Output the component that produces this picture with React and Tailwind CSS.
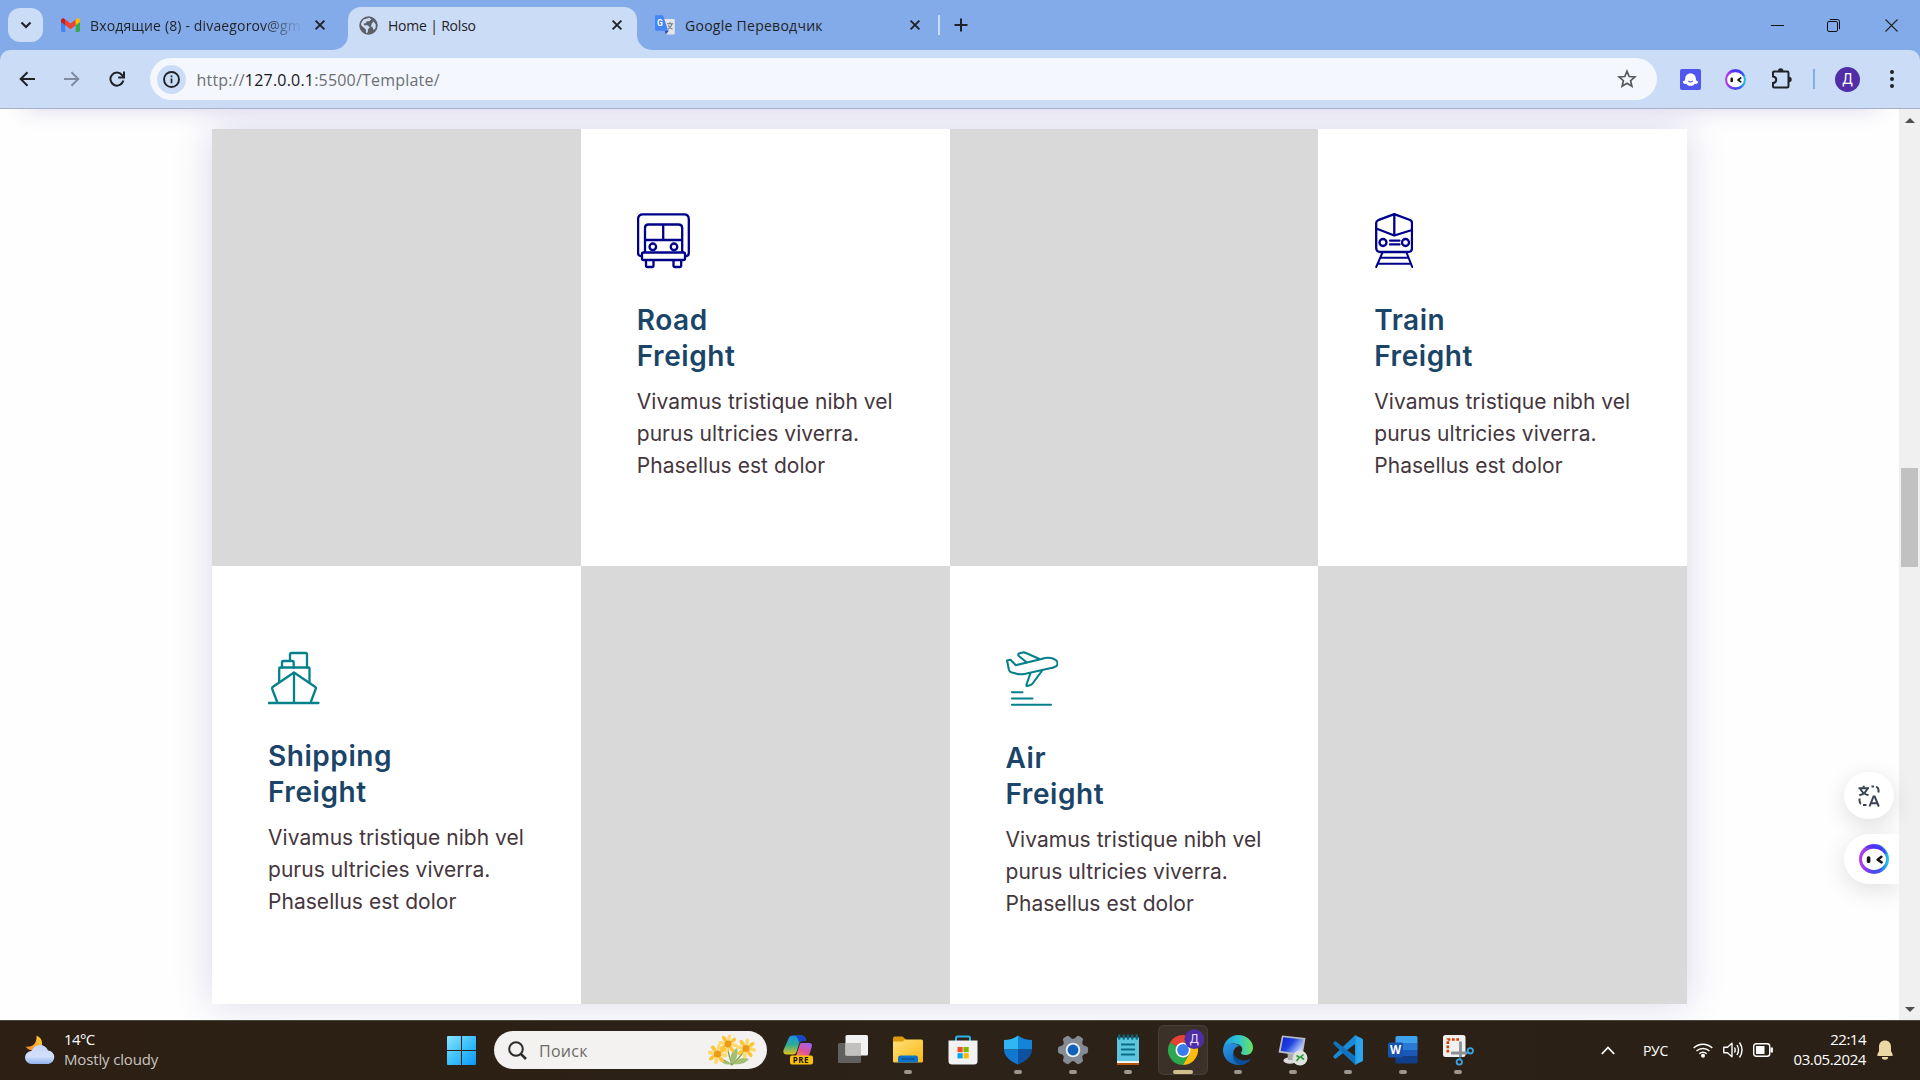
import React from "react";

const SEGOE = "font-['Open_Sans','Noto_Sans',sans-serif]";

/* ---------- small shared pieces ---------- */

function Cross({ className = "" }) {
  return (
    <svg viewBox="0 0 12 12" className={"h-3 w-3 shrink-0 " + className} fill="none" stroke="#1f2226" strokeWidth="1.9">
      <path d="M1.6 1.6 10.4 10.4M10.4 1.6 1.6 10.4" />
    </svg>
  );
}

function BotFace({ id, className }) {
  return (
    <svg viewBox="0 0 30 30" className={className}>
      <defs>
        <linearGradient id={id} x1="0.1" y1="0.7" x2="0.95" y2="0.75">
          <stop offset="0" stopColor="#b03be8" />
          <stop offset="0.35" stopColor="#5a45f5" />
          <stop offset="0.7" stopColor="#3a55f2" />
          <stop offset="1" stopColor="#22c3e6" />
        </linearGradient>
      </defs>
      <circle cx="15" cy="15" r="15" fill={"url(#" + id + ")"} />
      <path d="M6 3.5A15 15 0 0 1 28 10L23 9 15 4Z" fill="#4b2ff5" opacity="0.75" />
      <ellipse cx="15" cy="15.3" rx="12" ry="10.6" fill="#fff" />
      <rect x="7.8" y="12.3" width="3.6" height="6.8" rx="1.6" fill="#151515" />
      <path d="M22.4 12.8 18.6 15.7 22.6 18.4" fill="none" stroke="#151515" strokeWidth="2.5" strokeLinecap="round" strokeLinejoin="round" />
    </svg>
  );
}

/* ---------- tab strip ---------- */

function Gmail() {
  return (
    <svg viewBox="0 0 19 14" className="h-[14px] w-[19px]">
      <path d="M0 3v9.6C0 13.4.6 14 1.4 14H4.3V5.6Z" fill="#4285f4" />
      <path d="M14.7 5.6V14h2.9c.8 0 1.4-.6 1.4-1.4V3Z" fill="#34a853" />
      <path d="M4.3 1.6 9.5 5.6 14.7 1.6V7.2L9.5 11.2 4.3 7.2Z" fill="#ea4335" />
      <path d="M14.7 1.6 15.8.7C17.2-.4 19 .6 19 2.2V4L14.7 7.2Z" fill="#fbbc04" />
      <path d="M4.3 1.6 3.2.7C1.8-.4 0 .6 0 2.2V4L4.3 7.2Z" fill="#c5221f" />
    </svg>
  );
}

function Globe() {
  return (
    <svg viewBox="0 0 19 19" className="h-[19px] w-[19px]">
      <circle cx="9.5" cy="9.5" r="9.2" fill="#5c6066" />
      <path d="M10.5 1.8 12.3 3.6 10 5.2 7.8 5.2 7 7 4.8 7.5 5 9.3H8.8L10.8 11.5 9 13.2 8.8 16.6 7 16.9 6.8 13.5 2.2 9.3 2 7.5 4.5 3.5ZM14.5 5.5 16.8 8.5 16.6 12 14.5 14.3 13.8 11.5 12 10.5 12.8 7.5Z" fill="#cbdcf6" />
    </svg>
  );
}

function TranslateFav() {
  return (
    <svg viewBox="0 0 20 20" className="h-5 w-5">
      <path d="M8 4h10.6c.7 0 1.2.5 1.2 1.2v13c0 .7-.5 1.2-1.2 1.2H11.5Z" fill="#e3e5e9" />
      <path d="M9.5 15.5H14L11 19.3Z" fill="#3949ab" />
      <path d="M1.2.3H8L13.2 15.7H1.2C.6 15.7 0 15.2 0 14.5V1.5C0 .8.6.3 1.2.3Z" fill="#4285f4" />
      <path d="M12 8.8h6.2M15 7.3v1.5M17 8.8c-.5 2.2-2 4.2-4 5.4M13.3 10.5c1 1.8 2.4 3 4.2 3.8" fill="none" stroke="#6d7a80" strokeWidth="1.1" />
      <text x="2.1" y="10.7" fontSize="8.5" fontWeight="700" fill="#fff" fontFamily="Roboto, sans-serif">G</text>
    </svg>
  );
}

function TabStrip() {
  return (
    <div className="flex h-[50px] items-center bg-[#84abe9]">
      <div className="ml-2 flex h-[34px] w-[35px] shrink-0 items-center justify-center rounded-xl bg-[#cbdcf6]">
        <svg viewBox="0 0 12 8" className="h-2 w-3" fill="none" stroke="#1f2226" strokeWidth="2.1">
          <path d="M1.5 1.5 6 6l4.5-4.5" />
        </svg>
      </div>

      <div className="ml-[18px] flex h-full w-[287px] shrink-0 items-center">
        <Gmail />
        <div className="ml-[10px] w-[212px] whitespace-nowrap bg-gradient-to-r from-[#1f2226] from-82% to-[#1f2226]/10 to-98% bg-clip-text pt-[2px] text-[14px] leading-5 tracking-[0.15px] text-transparent">
          Входящие (8) - divaegorov@gm
        </div>
        <Cross className="ml-[12px]" />
      </div>

      <div className="relative flex h-[43px] w-[289px] shrink-0 items-center self-end rounded-t-[13px] bg-[#cbdcf6] pb-[7px] pl-[11px]">
        <svg viewBox="0 0 15 15" className="absolute -left-[15px] bottom-0 h-[15px] w-[15px]"><path d="M15 0V15H0A15 15 0 0 0 15 0Z" fill="#cbdcf6" /></svg>
        <svg viewBox="0 0 15 15" className="absolute -right-[15px] bottom-0 h-[15px] w-[15px]"><path d="M0 0V15H15A15 15 0 0 1 0 0Z" fill="#cbdcf6" /></svg>
        <Globe />
        <span className="ml-[10px] w-[216px] whitespace-nowrap pt-[2px] text-[14px] leading-5 tracking-[-0.2px] text-[#1f2226]">Home | Rolso</span>
        <Cross className="ml-[7px]" />
      </div>

      <div className="ml-[18px] flex w-[266px] shrink-0 items-center">
        <TranslateFav />
        <span className="ml-[10px] w-[216px] whitespace-nowrap pt-[2px] text-[14px] leading-5 tracking-[0.27px] text-[#1f2226]">Google Переводчик</span>
        <Cross className="ml-[8px]" />
      </div>
      <div className="ml-[17px] h-5 w-[2px] bg-[#cbdcf6]" />
      <svg viewBox="0 0 14 14" className="ml-[13.500px] h-[14px] w-[14px]" stroke="#1f2226" strokeWidth="2"><path d="M7 .5v13M.5 7h13" /></svg>

      <div className="ml-auto mr-[22px] flex items-center">
        <svg viewBox="0 0 13 13" className="h-[13px] w-[13px]" stroke="#111" strokeWidth="1"><path d="M0 6.5h13" /></svg>
        <svg viewBox="0 0 13 13" className="ml-[43px] h-[13px] w-[13px]" fill="none" stroke="#111" strokeWidth="1">
          <rect x=".5" y="2.5" width="10" height="10" rx="1.5" />
          <path d="M2.8.5H10.5A2 2 0 0 1 12.5 2.5V10.2" />
        </svg>
        <svg viewBox="0 0 13 13" className="ml-[45px] h-[13px] w-[13px]" stroke="#222" strokeWidth="1.1"><path d="M.5.5l12 12M12.5.5l-12 12" /></svg>
      </div>
    </div>
  );
}

/* ---------- toolbar ---------- */

function Toolbar() {
  return (
    <div className="bg-[#84abe9]">
      <div className="flex h-[59px] items-center rounded-t-[10px] border-b border-[#a5b1ca] bg-[#cbdcf6]">
        <svg viewBox="0 0 16 16" className="ml-[19px] h-4 w-4" fill="none" stroke="#1f2226" strokeWidth="2"><path d="M16 8H2M8.5 1.2 1.7 8l6.8 6.8" /></svg>
        <svg viewBox="0 0 16 16" className="ml-[29px] h-4 w-4" fill="none" stroke="#7f8ba0" strokeWidth="2"><path d="M0 8h14M7.5 1.2 14.3 8l-6.8 6.8" /></svg>
        <svg viewBox="0 0 16 16" className="ml-[29px] h-4 w-4" fill="none" stroke="#1f2226" strokeWidth="2">
          <path d="M14.3 9.5A6.5 6.5 0 1 1 13 4L15 6.2" />
          <path d="M15 .5V6.4H9.2" />
        </svg>

        <div className="ml-[25px] flex h-[42px] w-[1507px] items-center rounded-full bg-[#f4f7fd]">
          <div className="ml-[7px] flex h-[29px] w-[29px] items-center justify-center rounded-full bg-[#cbdcf6]">
            <svg viewBox="0 0 17 17" className="h-[17px] w-[17px]" fill="none" stroke="#1f2226" strokeWidth="1.9">
              <circle cx="8.5" cy="8.5" r="7.5" />
              <path d="M8.5 7.6v4.7M8.5 4.5v1.8" strokeWidth="1.7" />
            </svg>
          </div>
          <div className="ml-[10.5px] whitespace-nowrap pt-[2px] text-[16px] leading-6 tracking-[0.2px] text-[#6b7075]">
            http://<span className="text-[#16181b]">127.0.0.1</span>:5500/Template/
          </div>
          <svg viewBox="0 0 20 20" className="ml-auto mr-5 h-5 w-5" fill="none" stroke="#55595f" strokeWidth="1.7">
            <path d="M10 2.3 12.2 7.5 17.9 8 13.6 11.7 14.9 17.3 10 14.3 5.1 17.3 6.4 11.7 2.1 8 7.8 7.5Z" />
          </svg>
        </div>

        <svg viewBox="0 0 21 21" className="ml-[23px] h-[21px] w-[21px]">
          <rect width="21" height="21" rx="2" fill="#5156ee" />
          <circle cx="10.5" cy="9.5" r="5.3" fill="#fff" />
          <path d="M5.3 9.5C5.3 12 3.5 12 2.8 12.8 3 15 5.5 15.3 6.5 15 8 17 9.5 17 10.5 16.8 11.5 17 13 17 14.5 15 15.5 15.3 18 15 18.2 12.8 17.5 12 15.7 12 15.7 9.5Z" fill="#fff" />
          <path d="M8.3 11.8c1.2 1.5 3.2 1.5 4.4 0" stroke="#5156ee" strokeWidth="1.2" fill="none" />
        </svg>
        <BotFace id="bot-small" className="ml-6 h-[21px] w-[21px]" />
        <svg viewBox="0 0 22 22" className="ml-[25px] h-[22px] w-[22px]">
          <path d="M3 3.5H16.3Q17.5 3.5 17.5 4.7V18.3Q17.5 19.5 16.3 19.5H3.2Q2 19.5 2 18.3V15C6.3 14.6 6.3 8.8 2 8.4V4.5Q2 3.5 3 3.5Z" fill="none" stroke="#1f2226" strokeWidth="2" />
          <path d="M7 3a2.7 2.7 0 0 1 5.4 0ZM18 8.8a2.7 2.7 0 0 1 0 5.4Z" fill="#1f2226" />
        </svg>
        <div className="ml-[20px] h-5 w-[2px] bg-[#84abe9]" />
        <div className="ml-5 flex h-[25px] w-[25px] items-center justify-center rounded-full bg-[#512da8] font-['Roboto',sans-serif] text-[14px] leading-none text-white">Д</div>
        <svg viewBox="0 0 4 18" className="ml-[30px] h-[18px] w-1" fill="#1f2226"><circle cx="2" cy="2" r="2" /><circle cx="2" cy="9" r="2" /><circle cx="2" cy="16" r="2" /></svg>
      </div>
    </div>
  );
}

/* ---------- freight cards ---------- */

function BusIcon() {
  return (
    <svg viewBox="0 0 53 56" className="h-14 w-[53px]" fill="none" stroke="#00008b" strokeWidth="2.3" strokeLinejoin="round">
      <path d="M5 43H4Q1.1 43 1.1 40V6Q1.1 1.3 6 1.3H47Q51.8 1.3 51.8 6V40Q51.8 43 49 43H48" />
      <path d="M8 39V15Q8 11.5 11.5 11.5H41.5Q45.2 11.5 45.2 15V39M8 27H45.2M26.2 11.5V27" />
      <rect x="5" y="39.5" width="43" height="7.5" rx="1.5" />
      <circle cx="15.8" cy="33.8" r="3.3" /><circle cx="37" cy="33.8" r="3.3" />
      <path d="M9 47V52.5Q9 54 10.5 54H15Q16.5 54 16.5 52.5V47M36.5 47V52.5Q36.5 54 38 54H42.5Q44.2 54 44.2 52.5V47" />
    </svg>
  );
}

function TrainIcon() {
  return (
    <svg viewBox="0 0 38 56" className="ml-[1px] h-14 w-[38px]" fill="none" stroke="#00008b" strokeWidth="2.3" strokeLinejoin="round" strokeLinecap="round">
      <path d="M19.3 1.2 35 7Q37 7.8 37 10V35Q37 39 33 39H5.5Q1.2 39 1.2 35V10Q1.2 8 3.2 7.2Z" />
      <path d="M1.2 15.5 19.3 22.5 37 17M19.3 1.2V22.5" />
      <circle cx="8" cy="29.5" r="3.5" /><circle cx="30.5" cy="29.5" r="3.5" />
      <path d="M15 27.6H24.5M15 31.4H24.5" />
      <path d="M7.5 39.5 1.2 54M31.5 39.5 37.2 54M5.8 44.7H33.5M3.5 50.7H35.8" strokeWidth="2" />
    </svg>
  );
}

function ShipIcon() {
  return (
    <svg viewBox="0 0 52 54" className="h-[54px] w-[52px]" fill="none" stroke="#06808a" strokeWidth="2.3" strokeLinejoin="round" strokeLinecap="round">
      <path d="M.8 52H50.5M9.2 51 4.2 38Q3.7 36.5 5 35.7L26 21.5 47 35.7Q48.3 36.5 47.7 38L42.8 51M26 21.5V52" />
      <path d="M11.2 31V17.5Q11.2 16.5 12.2 16.5H40.5Q41.5 16.5 41.5 17.5V31" />
      <path d="M14 16.5V11Q14 10 15 10H24.5Q25.7 10 25.7 11V16.5M22 10V3.5Q22 2 23.5 2H37.5Q39 2 39 3.5V16.5" />
    </svg>
  );
}

function PlaneIcon() {
  return (
    <svg viewBox="0 0 52 56" className="h-14 w-[52px]" fill="none" stroke="#06808a" strokeWidth="2.1" strokeLinejoin="round" strokeLinecap="round">
      <path d="M1 9.5 4.5 8.8 9.8 14.2 35.5 8Q42 5.5 47.5 7.8 53 10 51 14.3 50 16.3 44 17.2L19.5 22.7Q13 24 9 22.3L5 21.3Q3.5 21 2.8 18.3Z" />
      <path d="M20.5 11.3 12.5 4.8Q12 3 13 2.5L16.5 1.5Q18 1 20 2L33.5 8" />
      <path d="M24.5 22 20.5 33.5Q20 35 21.5 35L24.5 34Q26 33.5 27 32L36.5 19" />
      <path d="M6 41.2H16.5M6 47.5H26.5M6 53.7H45" />
    </svg>
  );
}

function FreightCard({ icon, name, pad = "pt-[84px]" }) {
  return (
    <article className={"bg-white pl-14 " + pad}>
      {icon}
      <h3 className="mt-[33px] font-['Inter',sans-serif] text-[28px] font-semibold leading-9 tracking-[0.55px] text-[#1a4569]">
        {name}
        <br />
        Freight
      </h3>
      <p className="mt-[12px] whitespace-nowrap font-['Inter',sans-serif] text-[21px] font-normal leading-8 tracking-[0.04px] text-[#45363d]">
        Vivamus tristique nibh vel
        <br />
        purus ultricies viverra.
        <br />
        Phasellus est dolor
      </p>
    </article>
  );
}

const Blank = () => <div className="bg-[#d9d9d9]" />;

function Page() {
  return (
    <div className="relative flex h-[911px] overflow-hidden bg-[#fefefe]">
      <div className="absolute -top-10 left-6 h-[38px] w-[1852px] shadow-[0_0_24px_rgba(55,46,150,0.22)]" />
      <main className="ml-[212px] mt-5 grid h-[875px] w-[1475px] grid-cols-4 grid-rows-[437px_438px] shadow-[0_0_36px_rgba(55,46,150,0.19)]">
        <Blank />
        <FreightCard icon={<BusIcon />} name="Road" />
        <Blank />
        <FreightCard icon={<TrainIcon />} name="Train" />
        <FreightCard icon={<ShipIcon />} name="Shipping" pad="pt-[85px]" />
        <Blank />
        <FreightCard icon={<PlaneIcon />} name="Air" pad="pt-[85px]" />
        <Blank />
      </main>

      <div className="relative ml-auto flex w-[21px] flex-col items-center bg-[#f0f0f0] pt-[9px]">
        <svg viewBox="0 0 10 5" className="h-[5px] w-[10px]" fill="#4f4f4f"><path d="M0 5 5 0l5 5Z" /></svg>
        <div className="mt-[345px] h-[99px] w-[17px] bg-[#c1c1c1]" />
        <svg viewBox="0 0 10 5" className="mb-2 mt-auto h-[5px] w-[10px]" fill="#4f4f4f"><path d="M0 0l5 5 5-5Z" /></svg>
      </div>

      <div className="absolute right-[26px] top-[663px] flex h-[47px] w-[50px] items-center justify-center rounded-full bg-white shadow-[0_6px_22px_rgba(0,0,0,0.13)]">
        <svg viewBox="0 0 22 22" className="h-[22px] w-[22px]" fill="none" stroke="#3b4252" strokeWidth="2">
          <path d="M.5 3.3h10.5M5.7.8v2.5M9.3 3.5C8.3 7 5 9.5 1.3 10.3M2.3 3.5C3.5 7 6.5 9.3 10.5 10.3" />
          <path d="M13.5 1.5H16M18 1.9Q20.5 2.6 20.5 5V7.5M1.5 13.5V15.5Q1.5 18 3 19M5 20H8.5" />
          <path d="M11.5 21.5 15.5 11.5h1.2L20.8 21.5M13 18.3h6.3" />
        </svg>
      </div>
      <div className="absolute right-[21px] top-[725px] flex h-[50px] w-[55px] items-center rounded-l-full bg-white pl-[15px] shadow-[0_6px_24px_rgba(0,0,0,0.12)] [clip-path:inset(-40px_0_-40px_-40px)]">
        <BotFace id="bot-large" className="h-[30px] w-[30px]" />
      </div>
    </div>
  );
}

/* ---------- taskbar ---------- */

function TaskDefs() {
  return (
    <svg className="absolute h-0 w-0">
      <defs>
        <linearGradient id="win" gradientUnits="userSpaceOnUse" x1="0" y1="0" x2="29" y2="29"><stop offset="0" stopColor="#8be3ff" /><stop offset=".5" stopColor="#3dc1fb" /><stop offset="1" stopColor="#0a95f8" /></linearGradient>
        <linearGradient id="cpA" x1="0" y1="0" x2="0" y2="1"><stop offset="0" stopColor="#1c8fe8" /><stop offset=".5" stopColor="#2fae8f" /><stop offset="1" stopColor="#e8c31c" /></linearGradient>
        <linearGradient id="cpB" x1="0.8" y1="0" x2="0.2" y2="1"><stop offset="0" stopColor="#a060f5" /><stop offset=".5" stopColor="#e0529a" /><stop offset="1" stopColor="#fb8a4a" /></linearGradient>
        <linearGradient id="folder" x1="0" y1="0" x2="1" y2="1"><stop offset="0" stopColor="#ffe07a" /><stop offset="1" stopColor="#fcb711" /></linearGradient>
        <linearGradient id="edgeA" x1="0" y1="0.5" x2="1" y2="0.5"><stop offset="0" stopColor="#1f9fe0" /><stop offset=".5" stopColor="#2fc3d6" /><stop offset="1" stopColor="#6be35a" /></linearGradient>
        <linearGradient id="edgeB" x1="0" y1="0" x2="0.8" y2="1"><stop offset="0" stopColor="#2a9be8" /><stop offset="1" stopColor="#0f59a8" /></linearGradient>
        <linearGradient id="rdp" x1="0" y1="0" x2="1" y2="0.6"><stop offset="0" stopColor="#1020d0" /><stop offset=".5" stopColor="#2244e0" /><stop offset="1" stopColor="#c8d8ff" /></linearGradient>
        <linearGradient id="cloud" x1="0" y1="0" x2="0" y2="1"><stop offset="0" stopColor="#c4d6fb" /><stop offset=".6" stopColor="#d3e0fa" /><stop offset="1" stopColor="#8fb0ee" /></linearGradient>
        <linearGradient id="moon" x1="0" y1="1" x2="1" y2="0"><stop offset="0" stopColor="#f5821f" /><stop offset="1" stopColor="#ffd23e" /></linearGradient>
      </defs>
    </svg>
  );
}

function Flowers() {
  const bloom = (x, y, r) => (
    <g key={x}>
      {[0, 45, 90, 135, 180, 225, 270, 315].map((a) => (
        <ellipse key={a} cx={x} cy={y - r * 0.66} rx={r * 0.19} ry={r * 0.36} fill={a % 90 ? "#fbc63a" : "#ffd96b"} transform={"rotate(" + (a + 10) + " " + x + " " + y + ")"} />
      ))}
      <circle cx={x} cy={y} r={r * 0.36} fill="#ee9a14" />
    </g>
  );
  return (
    <svg viewBox="0 0 48 32" className="h-8 w-12">
      <path d="M24 31C22 24 20 20 20 14M24 31C28 26 34 22 36 16M24 31C20 28 14 26 10 22" stroke="#7fa04c" strokeWidth="1.3" fill="none" />
      <path d="M24 30C20 22 25 16 29 14 31 20 28 27 24 30ZM25 30C30 24 36 23 41 25 37 30 30 31 25 30ZM23 30C20 27 16 26 13 27 15 30 19 31 23 30Z" fill="#a3bf72" />
      {bloom(20, 10, 9.5)}
      {bloom(9.5, 20, 10)}
      {bloom(38, 14.5, 10)}
    </svg>
  );
}

const art = {
  copilot: (
    <>
      <path d="M6 2.5Q7 .5 10 .5H19Q21.5 .5 22.3 3L23 6H19Q17 6 16 9L13.5 17Q12.5 19.5 10 19.5H4Q-.5 19.5 .5 15Z" fill="url(#cpA)" />
      <path d="M12 .5H19Q21.5 .5 22.5 3.5L23 6H19Q17 6 16 8.5 15.5 2.5 12 .5Z" fill="#1746c8" />
      <path d="M18 8H26Q30 8 28.7 12L26.5 19Q25 24 21 24H12L16 12Q17 8 18 8Z" fill="url(#cpB)" />
      <rect x="7" y="20.5" width="23" height="9" rx="2" fill="#fcc20d" />
      <text x="9.8" y="28" fontSize="8" fontWeight="700" fill="#111" letterSpacing=".5" fontFamily="Open Sans, sans-serif">PRE</text>
    </>
  ),
  taskview: (
    <>
      <rect x="0" y="8" width="23" height="20" rx="1.5" fill="#626160" />
      <rect x="7.5" y="0" width="22.5" height="20.5" rx="1.5" fill="#f1f1f1" />
      <rect x="7.5" y="8" width="15.5" height="12.5" fill="#c2c1c0" />
    </>
  ),
  folder: (
    <>
      <path d="M0 3.2Q0 1.5 1.7 1.5H9.5L13 4.5V10H0Z" fill="#dd9b0b" />
      <path d="M0 6.5H9.5L12.5 4.5H28.5Q30 4.5 30 6V26Q30 27.5 28.5 27.5H1.5Q0 27.5 0 26Z" fill="url(#folder)" />
      <path d="M5 27.5V23Q5 20.5 7.5 20.5H22.5Q25 20.5 25 23V27.5Z" fill="#0a72c9" />
      <path d="M8.5 24H21.5" stroke="#064a8c" strokeWidth="1.2" />
    </>
  ),
  store: (
    <>
      <path d="M8 6V3Q8 1.5 9.5 1.5H20.5Q22 1.5 22 3V6" fill="none" stroke="#28b4ea" strokeWidth="2" />
      <path d="M.5 5.5H29.5V26Q29.5 29.5 26 29.5H4Q.5 29.5 .5 26Z" fill="#f2f2f2" />
      <path d="M9.5 12h5.2v5.2H9.5Z" fill="#f25022" /><path d="M15.5 12h5.2v5.2h-5.2Z" fill="#7fba00" />
      <path d="M9.5 18.2h5.2v5.2H9.5Z" fill="#00a4ef" /><path d="M15.5 18.2h5.2v5.2h-5.2Z" fill="#ffb900" />
    </>
  ),
  shield: (
    <>
      <path d="M15 .5C11 3.5 6 5 1 5V14.5H15Z" fill="#30b6f2" />
      <path d="M15 .5C19 3.5 24 5 29 5V14.5H15Z" fill="#1583d8" />
      <path d="M1 14.5C1 21 7 26.5 15 29.5V14.5Z" fill="#0f78d0" />
      <path d="M29 14.5C29 21 23 26.5 15 29.5V14.5Z" fill="#0c52a0" />
    </>
  ),
  gear: (
    <>
      <g fill="#858b94">
        <circle cx="15" cy="15" r="11.3" />
        {[30, 90, 150, 210, 270, 330].map((a) => (
          <path key={a} d="M10.8 5 12.2 .8Q15 -.2 17.8 .8L19.2 5Z" transform={"rotate(" + a + " 15 15)"} stroke="#858b94" strokeWidth="1" strokeLinejoin="round" />
        ))}
      </g>
      <circle cx="15" cy="15" r="7.3" fill="#e9edf1" />
      <circle cx="15" cy="15" r="5.4" fill="#0f62b5" />
    </>
  ),
  notepad: (
    <>
      <path d="M4 2.5H26V27H4Z" fill="#5cc6e0" />
      <path d="M4 26H26V28H4Z" fill="#f4f4f4" /><path d="M4 28H26V30H4Z" fill="#b5560f" />
      <path d="M6.3 .5v3M10.7 .5v3M15 .5v3M19.3 .5v3M23.7 .5v3" stroke="#0c6583" strokeWidth="2.4" strokeLinecap="round" />
      <path d="M8 9.5H22M8 14.5H22M8 19.5H22" stroke="#0e6a86" strokeWidth="2" />
    </>
  ),
  chrome: (
    <>
      <path d="M15 15 2 7.5A15 15 0 0 1 28 7.5H15Z" fill="#e94235" />
      <path d="M15 15 2 7.5A15 15 0 0 0 15 30L21.5 18.7Z" fill="#2fa650" />
      <path d="M28 7.5A15 15 0 0 1 15 30L21.5 18.7 21.5 7.5Z" fill="#fbbc0c" />
      <circle cx="15" cy="15" r="7.5" fill="#fff" /><circle cx="15" cy="15" r="5.9" fill="#3b7ded" />
      <circle cx="26.3" cy="4.2" r="9.9" fill="#4f2da6" />
      <text x="26.3" y="8.3" fontSize="12" textAnchor="middle" fill="#e6def8" fontFamily="Roboto, sans-serif">Д</text>
    </>
  ),
  edge: (
    <>
      <path d="M.3 13C1.5 5.5 8 0 15 0 23.5 0 30 6 30 12.5 30 17.5 26.5 20 22.5 20 19.5 20 17.5 18.8 18 17.5 18.5 16.8 19.3 16 19.3 14 19.3 11.5 16 8.5 11 8.5 6 8.5 2 10.5 .3 13Z" fill="url(#edgeA)" />
      <path d="M0 15C0 11 4 8.5 9 8.5 12 8.5 15 9.5 17 11 13 11 10.3 14.5 10.3 18 10.3 23 15 26 20 26 22.5 26 25 25.2 27.5 24.2 25 28 20.5 30 15.5 30 7 30 0 23.5 0 15Z" fill="url(#edgeB)" />
      <path d="M10.3 17C8.5 22 11.5 28 17 29.9 21.5 29.7 25.5 27.5 27.5 24.2 19 27.5 11.5 24 10.3 17Z" fill="#0d4d95" />
    </>
  ),
  rdp: (
    <>
      <ellipse cx="12" cy="25.5" rx="6.5" ry="3.3" fill="#dcdcdc" />
      <path d="M9.5 18 15.5 19V25H10Z" fill="#aaa" />
      <path d="M4 .5 27.5 3 24.5 21 .5 17.5Z" fill="#b9bdc6" />
      <path d="M5.3 2.3 25.5 4.4 23 18.8 2.7 16Z" fill="url(#rdp)" />
      <circle cx="22" cy="23" r="7.5" fill="#dfe3df" />
      <path d="M18.5 20.5 21.5 22.5 18.5 26M25.5 19.5 22.8 22 26 24.5" fill="none" stroke="#2e9e34" strokeWidth="1.7" />
    </>
  ),
  vscode: (
    <>
      <path d="M22 .3 29 3.5Q30 4 30 5V25Q30 26 29 26.5L22 29.7Z" fill="#2ba6ee" />
      <path d="M22 .3V9L3 23.5Q2.3 24 1.5 23.4L.5 22.3Q-.2 21.5 .6 20.8Z" fill="#1a8ad6" />
      <path d="M22 29.7V21L3 6.5Q2.3 6 1.5 6.6L.5 7.7Q-.2 8.5 .6 9.2Z" fill="#0f74bd" />
      <path d="M22 .3 23.5 1V29L22 29.7Z" fill="#2196e0" />
    </>
  ),
  word: (
    <>
      <path d="M7.5 2.5Q7.5 1 9 1H28Q29.5 1 29.5 2.5V8H7.5Z" fill="#3fa2ee" />
      <path d="M7.5 8H29.5V15H7.5Z" fill="#2a79d6" /><path d="M7.5 15H29.5V21.5H7.5Z" fill="#1a59ba" />
      <path d="M7.5 21.5H29.5V27Q29.5 28.5 28 28.5H9Q7.5 28.5 7.5 27Z" fill="#113e8c" />
      <rect x="0" y="7.5" width="15" height="15" rx="1.5" fill="#1853b0" />
      <text x="7.5" y="19" fontSize="11.5" fontWeight="700" textAnchor="middle" fill="#fff" fontFamily="Open Sans, sans-serif">W</text>
    </>
  ),
  snip: (
    <>
      <rect x="0" y="0" width="22.5" height="22" rx="2.5" fill="#f0f0f0" />
      <path d="M4.8 17.5V4.5H17" fill="none" stroke="#d83b01" strokeWidth="2.6" strokeDasharray="2.7 1.6" />
      <path d="M17.5 6.5V22M8 18H24" stroke="#8c9196" strokeWidth="2.8" />
      <path d="M17 22.5 16.8 24.5M24 18 26 16.5" stroke="#2e95d8" strokeWidth="2.2" />
      <circle cx="16.3" cy="27" r="2.7" fill="none" stroke="#38a3e2" strokeWidth="1.8" />
      <circle cx="27.3" cy="15.8" r="2.7" fill="none" stroke="#38a3e2" strokeWidth="1.8" />
    </>
  ),
};

const apps = [
  ["copilot", false],
  ["taskview", false],
  ["folder", true],
  ["store", false],
  ["shield", true],
  ["gear", true],
  ["notepad", true],
  ["chrome", true],
  ["edge", true],
  ["rdp", true],
  ["vscode", true],
  ["word", true],
  ["snip", true],
];

function AppButton({ name, running }) {
  const active = name === "chrome";
  return (
    <div className="flex w-[55px] justify-center">
      <div className={"flex h-[50px] w-[50px] flex-col items-center rounded-md pt-[10px] " + (active ? "bg-[#3c3128] ring-1 ring-inset ring-[#483e35]" : "")}>
        <svg viewBox="0 0 30 30" className="h-[30px] w-[30px] overflow-visible">{art[name]}</svg>
        {running && <div className={active ? "mt-[5px] h-1 w-5 rounded-full bg-[#cfc08b]" : "mt-[5px] h-1 w-2 rounded-full bg-[#9b9690]"} />}
      </div>
    </div>
  );
}

function Taskbar() {
  return (
    <div className="relative flex h-[60px] items-center border-t border-[#4b463c] bg-gradient-to-r from-[#2d1f13] via-[#2c2218] to-[#2b2015] pb-[1px]">
      <TaskDefs />
      <div className="flex w-[447px] items-center">
        <svg viewBox="0 0 30 30" className="ml-[25px] h-[30px] w-[30px]">
          <path d="M11.5 .5C17.5 3 19 10 14.5 14 11 17 4 16.5 .5 11.5 6 13 12.5 9 11.5 .5Z" fill="url(#moon)" />
          <path d="M6.5 29A6.5 6.5 0 0 1 6.5 16Q9 10 15 10 20.5 10 23 15.5A6.8 6.8 0 0 1 23.5 29Z" fill="url(#cloud)" />
        </svg>
        <div className="-mt-[3px] ml-[9px] text-[15px] leading-5 text-white">
          <div className="tracking-[-0.6px]">14°C</div>
          <div className="tracking-[-0.15px] text-[#c9c5c1]">Mostly cloudy</div>
        </div>
      </div>
      <svg viewBox="0 0 29 29" className="h-[29px] w-[29px]" fill="url(#win)">
        <path d="M0 1Q0 0 1 0H14V14H0ZM15 0H28Q29 0 29 1V14H15ZM0 15H14V29H1Q0 29 0 28ZM15 15H29V28Q29 29 28 29H15Z" />
      </svg>
      <div className="ml-[18px] flex h-[38px] w-[273px] items-center rounded-full bg-[#f3f2f0]">
        <svg viewBox="0 0 19 19" className="ml-[14px] h-[19px] w-[19px]" fill="none" stroke="#2b2b2b" strokeWidth="2"><circle cx="8" cy="8" r="6.8" /><path d="M12.8 12.8 18 18" strokeWidth="2.6" /></svg>
        <span className="ml-[12px] pt-[2px] text-[16px] leading-6 tracking-[0.3px] text-[#6c6a67]">Поиск</span>
        <div className="ml-auto mr-[11px]"><Flowers /></div>
      </div>
      <div className="ml-[3px] flex">
        {apps.map(([name, running]) => <AppButton key={name} name={name} running={running} />)}
      </div>

      <div className="ml-auto mr-[27px] flex items-center text-white">
        <svg viewBox="0 0 14 9" className="h-[9px] w-[14px]" fill="none" stroke="#fff" strokeWidth="1.8"><path d="M.8 8 7 1.5 13.2 8" /></svg>
        <span className="ml-[28px] w-[26px] pt-[1px] text-[14px] leading-5 tracking-[-0.3px]">РУС</span>
        <svg viewBox="0 0 20 16" className="ml-[24px] h-4 w-5" fill="none" stroke="#fff" strokeWidth="1.5">
          <path d="M.7 6A13.5 13.5 0 0 1 19.3 6M3.5 9A9.5 9.5 0 0 1 16.5 9M6.3 11.8A5.5 5.5 0 0 1 13.7 11.8" />
          <circle cx="10" cy="13.8" r="2" fill="#fff" stroke="none" />
        </svg>
        <svg viewBox="0 0 21 18" className="ml-[10px] h-[18px] w-[21px]" fill="none" stroke="#fff" strokeWidth="1.4" strokeLinejoin="round">
          <path d="M.8 6.3H4.5L9 2.3V15.7L4.5 11.7H.8ZM11.5 6.5Q13 9 11.5 11.5M14 4Q17 9 14 14M16.5 1.5Q21.5 9 16.5 16.5" />
        </svg>
        <svg viewBox="0 0 20 14" className="ml-[9px] h-[14px] w-5" fill="none" stroke="#fff" strokeWidth="1.4">
          <rect x=".7" y=".7" width="16" height="12.6" rx="2.5" /><path d="M18.7 4.5V9.5" strokeWidth="2.4" />
          <rect x="3" y="3" width="8.5" height="8" rx=".5" fill="#fff" stroke="none" />
        </svg>
        <div className="-mt-[3px] ml-[20px] w-[73px] text-right text-[15px] leading-5">
          <div className="tracking-[-0.5px]">22:14</div>
          <div className="tracking-[-0.4px]">03.05.2024</div>
        </div>
        <svg viewBox="0 0 16 20" className="ml-[11px] h-5 w-4" fill="#ead9a4">
          <path d="M8 .5C11.8 .5 14 3.2 14 6.5V11L15.7 14.5Q16 16 14.8 16H1.2Q0 16 .3 14.5L2 11V6.5C2 3.2 4.2 .5 8 .5ZM4.8 17H11.2A3.2 2.8 0 0 1 4.8 17Z" />
        </svg>
      </div>
    </div>
  );
}

export default function App() {
  return (
    <div className={"h-[1080px] w-[1920px] overflow-hidden " + SEGOE}>
      <TabStrip />
      <Toolbar />
      <Page />
      <Taskbar />
    </div>
  );
}
